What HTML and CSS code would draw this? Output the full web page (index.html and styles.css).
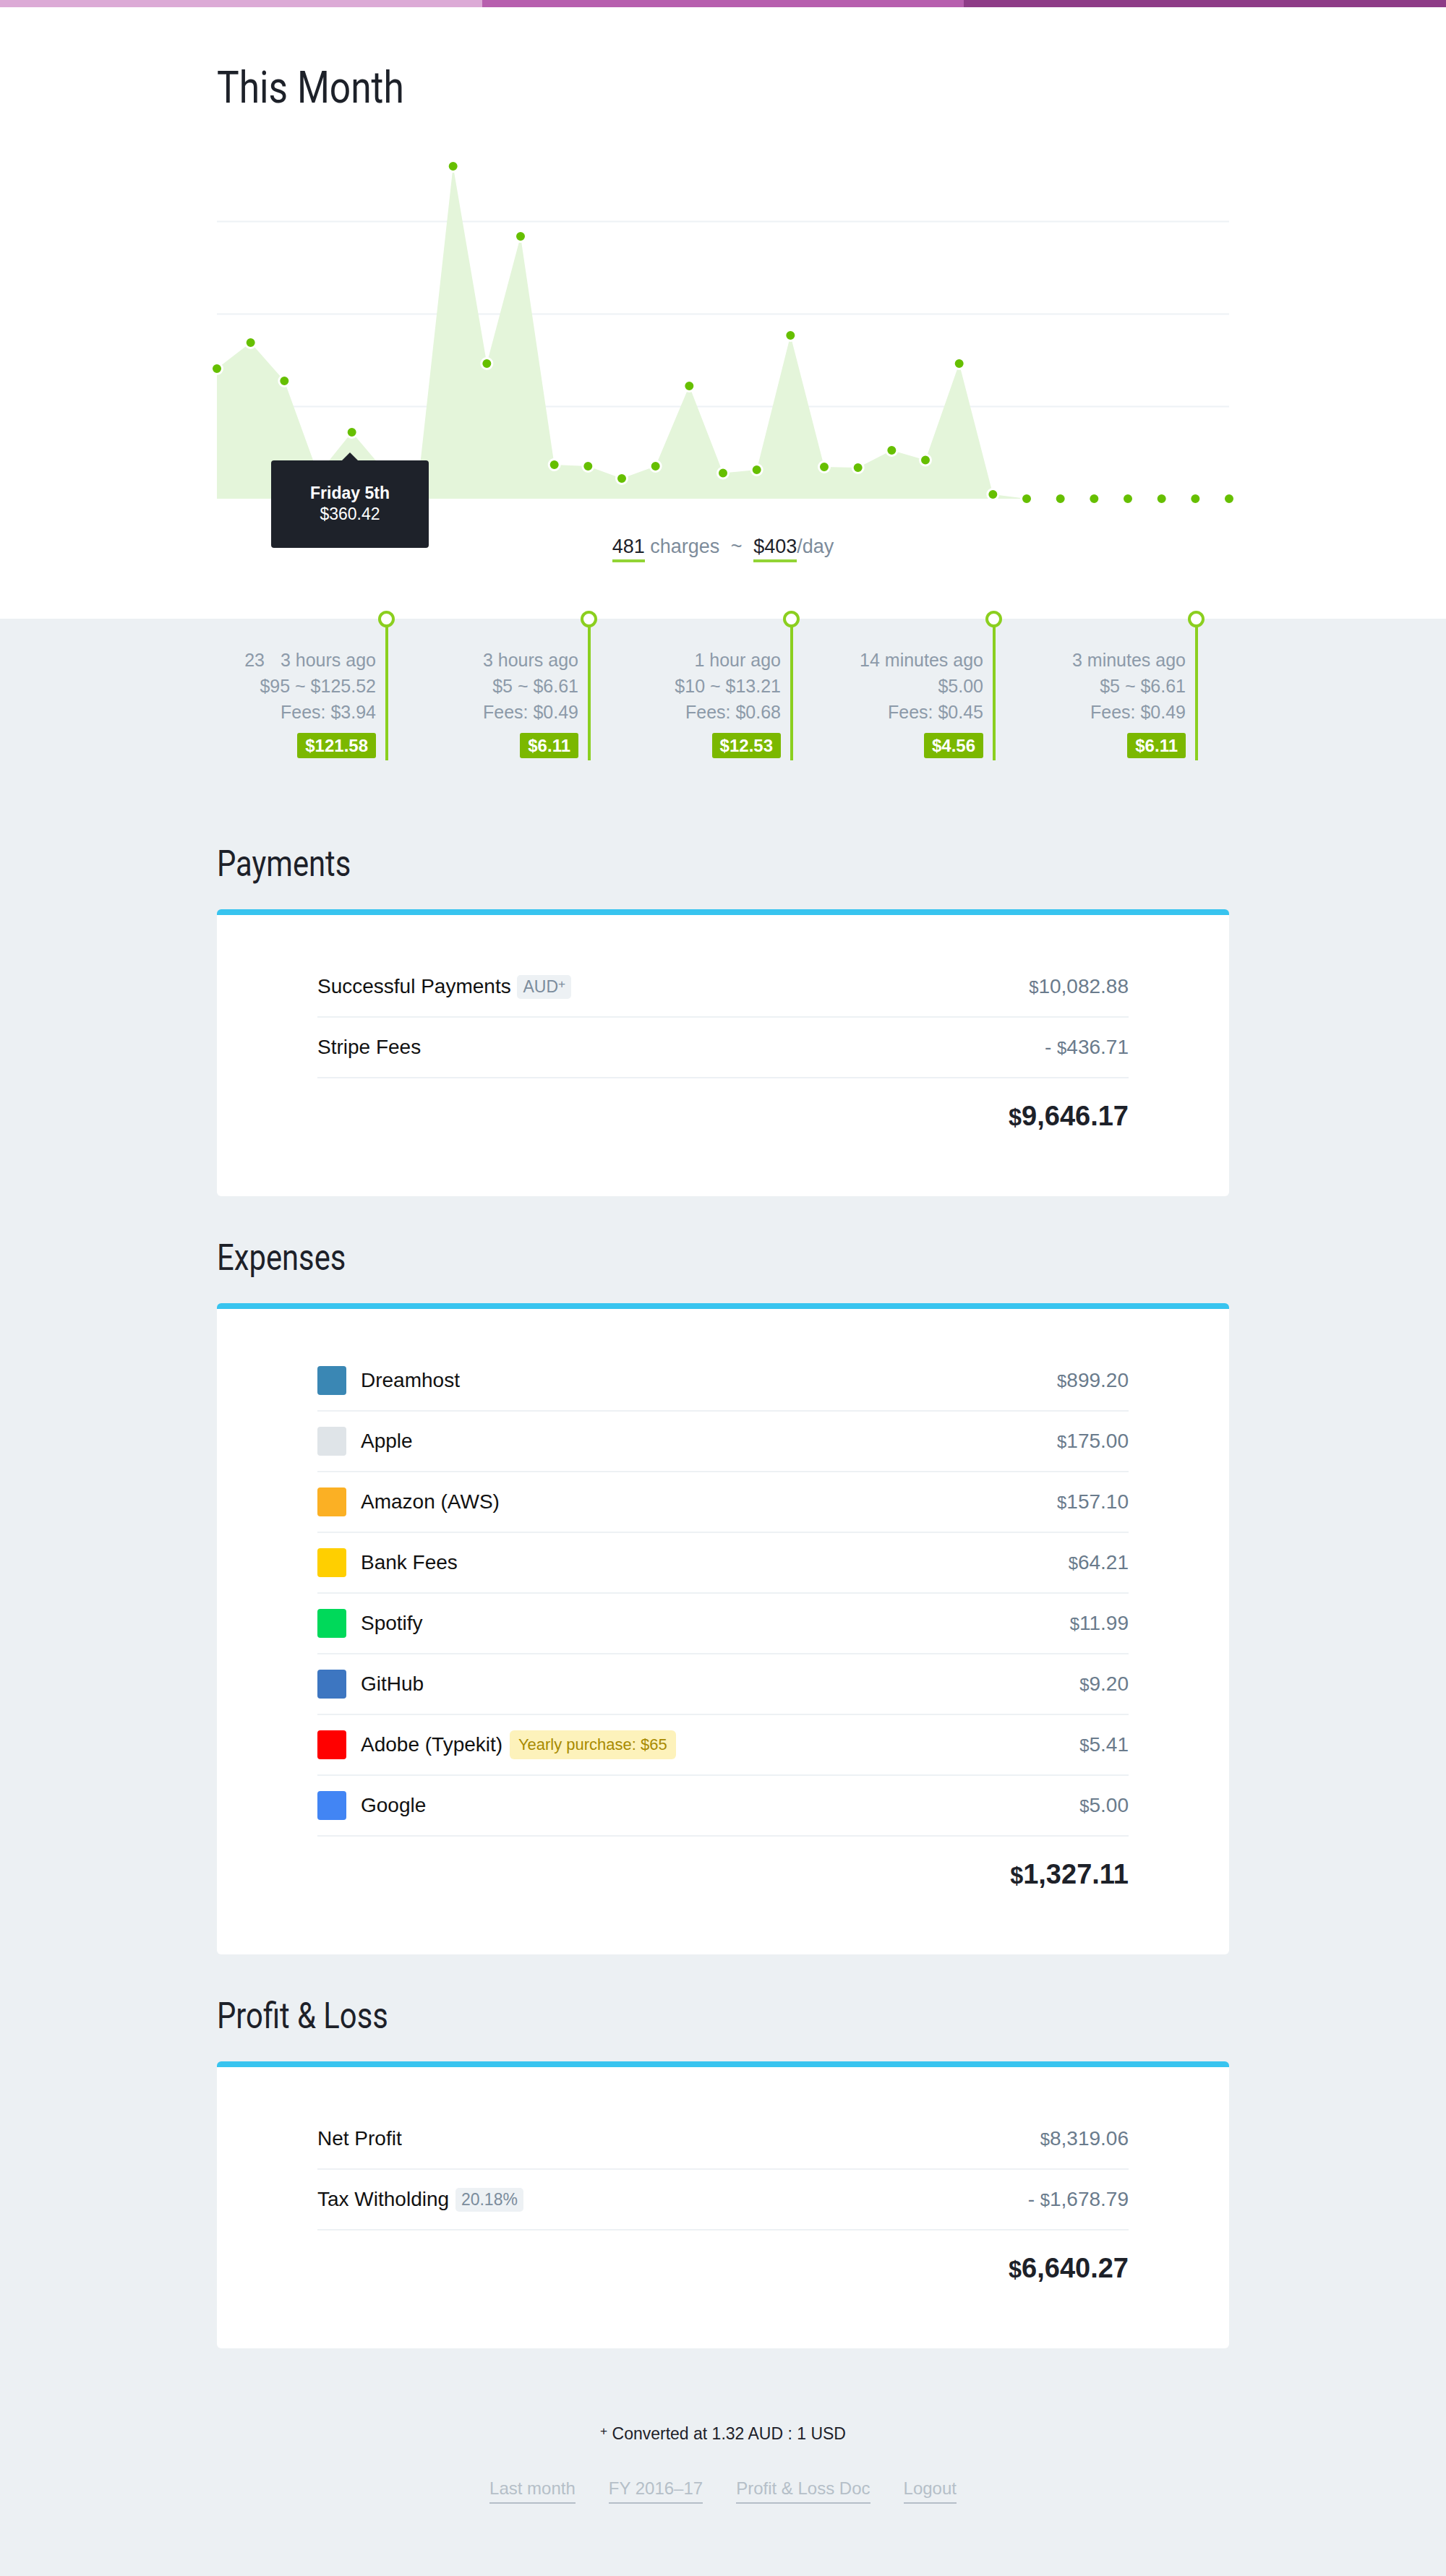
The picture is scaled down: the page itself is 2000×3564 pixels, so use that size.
FILE: index.html
```html
<!DOCTYPE html>
<html lang="en">
<head>
<meta charset="utf-8">
<title>This Month</title>
<link rel="stylesheet" href="styles.css">
</head>
<body>
<div class="topbar"><span class="seg seg-1"></span><span class="seg seg-2"></span><span class="seg seg-3"></span></div>

<header class="hero">
  <div class="wrap">
    <h1 class="title">This Month</h1>
    <div class="chart">
      <svg class="chart-svg" width="1400" height="530" viewBox="0 0 1400 530">
        <g class="grid">
          <line x1="0" y1="136.5" x2="1400" y2="136.5"/>
          <line x1="0" y1="264.5" x2="1400" y2="264.5"/>
          <line x1="0" y1="392.5" x2="1400" y2="392.5"/>
        </g>
        <path class="area" d="M0,520 L0,340 L46.67,304 L93.33,357 L140,486 L186.67,428 L233.33,483 L280,483 L326.67,60 L373.33,333 L420,157 L466.67,473 L513.33,475 L560,492 L606.67,475 L653.33,364 L700,484.5 L746.67,480 L793.33,294 L840,476 L886.67,477 L933.33,453 L980,466.5 L1026.67,333 L1073.33,514 L1120,520 L1400,520 Z"/>
        <g class="dots">
          <circle cx="0" cy="340" r="7.5"/>
          <circle cx="46.67" cy="304" r="7.5"/>
          <circle cx="93.33" cy="357" r="7.5"/>
          <circle cx="140" cy="486" r="7.5"/>
          <circle cx="186.67" cy="428" r="7.5"/>
          <circle cx="233.33" cy="483" r="7.5"/>
          <circle cx="280" cy="483" r="7.5"/>
          <circle cx="326.67" cy="60" r="7.5"/>
          <circle cx="373.33" cy="333" r="7.5"/>
          <circle cx="420" cy="157" r="7.5"/>
          <circle cx="466.67" cy="473" r="7.5"/>
          <circle cx="513.33" cy="475" r="7.5"/>
          <circle cx="560" cy="492" r="7.5"/>
          <circle cx="606.67" cy="475" r="7.5"/>
          <circle cx="653.33" cy="364" r="7.5"/>
          <circle cx="700" cy="484.5" r="7.5"/>
          <circle cx="746.67" cy="480" r="7.5"/>
          <circle cx="793.33" cy="294" r="7.5"/>
          <circle cx="840" cy="476" r="7.5"/>
          <circle cx="886.67" cy="477" r="7.5"/>
          <circle cx="933.33" cy="453" r="7.5"/>
          <circle cx="980" cy="466.5" r="7.5"/>
          <circle cx="1026.67" cy="333" r="7.5"/>
          <circle cx="1073.33" cy="514" r="7.5"/>
          <circle cx="1120" cy="520" r="7.5"/>
          <circle cx="1166.67" cy="520" r="7.5"/>
          <circle cx="1213.33" cy="520" r="7.5"/>
          <circle cx="1260" cy="520" r="7.5"/>
          <circle cx="1306.67" cy="520" r="7.5"/>
          <circle cx="1353.33" cy="520" r="7.5"/>
          <circle cx="1400" cy="520" r="7.5"/>
        </g>
      </svg>
      <div class="tooltip">
        <strong class="tooltip-day">Friday 5th</strong>
        <span class="tooltip-value">$360.42</span>
      </div>
    </div>
    <p class="summary"><span class="stat">481</span> charges <span class="tilde">~</span> <span class="stat">$403</span>/day</p>
  </div>
</header>

<main class="main">
  <div class="wrap">
    <div class="timeline">
      <div class="tl-item">
        <div class="tl-body">
          <div class="tl-line-text"><span class="ghost">23</span>3 hours ago</div>
          <div class="tl-line-text">$95 ~ $125.52</div>
          <div class="tl-line-text">Fees: $3.94</div>
          <div class="tl-badge">$121.58</div>
        </div>
        <div class="tl-rail"><span class="tl-dot"></span><span class="tl-stem"></span></div>
      </div>
      <div class="tl-item">
        <div class="tl-body">
          <div class="tl-line-text">3 hours ago</div>
          <div class="tl-line-text">$5 ~ $6.61</div>
          <div class="tl-line-text">Fees: $0.49</div>
          <div class="tl-badge">$6.11</div>
        </div>
        <div class="tl-rail"><span class="tl-dot"></span><span class="tl-stem"></span></div>
      </div>
      <div class="tl-item">
        <div class="tl-body">
          <div class="tl-line-text">1 hour ago</div>
          <div class="tl-line-text">$10 ~ $13.21</div>
          <div class="tl-line-text">Fees: $0.68</div>
          <div class="tl-badge">$12.53</div>
        </div>
        <div class="tl-rail"><span class="tl-dot"></span><span class="tl-stem"></span></div>
      </div>
      <div class="tl-item">
        <div class="tl-body">
          <div class="tl-line-text">14 minutes ago</div>
          <div class="tl-line-text">$5.00</div>
          <div class="tl-line-text">Fees: $0.45</div>
          <div class="tl-badge">$4.56</div>
        </div>
        <div class="tl-rail"><span class="tl-dot"></span><span class="tl-stem"></span></div>
      </div>
      <div class="tl-item">
        <div class="tl-body">
          <div class="tl-line-text">3 minutes ago</div>
          <div class="tl-line-text">$5 ~ $6.61</div>
          <div class="tl-line-text">Fees: $0.49</div>
          <div class="tl-badge">$6.11</div>
        </div>
        <div class="tl-rail"><span class="tl-dot"></span><span class="tl-stem"></span></div>
      </div>
    </div>

    <section class="panel">
      <h2 class="panel-title">Payments</h2>
      <div class="card">
        <div class="row">
          <div class="label">Successful Payments <span class="tag">AUD<sup class="sup">+</sup></span></div>
          <div class="amount"><span class="cur">$</span>10,082.88</div>
        </div>
        <div class="row">
          <div class="label">Stripe Fees</div>
          <div class="amount">- <span class="cur">$</span>436.71</div>
        </div>
        <div class="total"><span class="cur">$</span>9,646.17</div>
      </div>
    </section>

    <section class="panel">
      <h2 class="panel-title">Expenses</h2>
      <div class="card">
        <div class="row">
          <div class="label"><span class="swatch sw-dreamhost"></span>Dreamhost</div>
          <div class="amount"><span class="cur">$</span>899.20</div>
        </div>
        <div class="row">
          <div class="label"><span class="swatch sw-apple"></span>Apple</div>
          <div class="amount"><span class="cur">$</span>175.00</div>
        </div>
        <div class="row">
          <div class="label"><span class="swatch sw-amazon"></span>Amazon (AWS)</div>
          <div class="amount"><span class="cur">$</span>157.10</div>
        </div>
        <div class="row">
          <div class="label"><span class="swatch sw-bank"></span>Bank Fees</div>
          <div class="amount"><span class="cur">$</span>64.21</div>
        </div>
        <div class="row">
          <div class="label"><span class="swatch sw-spotify"></span>Spotify</div>
          <div class="amount"><span class="cur">$</span>11.99</div>
        </div>
        <div class="row">
          <div class="label"><span class="swatch sw-github"></span>GitHub</div>
          <div class="amount"><span class="cur">$</span>9.20</div>
        </div>
        <div class="row">
          <div class="label"><span class="swatch sw-adobe"></span>Adobe (Typekit) <span class="note">Yearly purchase: $65</span></div>
          <div class="amount"><span class="cur">$</span>5.41</div>
        </div>
        <div class="row">
          <div class="label"><span class="swatch sw-google"></span>Google</div>
          <div class="amount"><span class="cur">$</span>5.00</div>
        </div>
        <div class="total"><span class="cur">$</span>1,327.11</div>
      </div>
    </section>

    <section class="panel">
      <h2 class="panel-title">Profit &amp; Loss</h2>
      <div class="card">
        <div class="row">
          <div class="label">Net Profit</div>
          <div class="amount"><span class="cur">$</span>8,319.06</div>
        </div>
        <div class="row">
          <div class="label">Tax Witholding <span class="tag">20.18%</span></div>
          <div class="amount">- <span class="cur">$</span>1,678.79</div>
        </div>
        <div class="total"><span class="cur">$</span>6,640.27</div>
      </div>
    </section>

    <footer class="footer">
      <p class="footnote"><sup class="sup">+</sup> Converted at 1.32 AUD : 1 USD</p>
      <nav class="links">
        <a class="link" href="#">Last month</a>
        <a class="link" href="#">FY 2016–17</a>
        <a class="link" href="#">Profit &amp; Loss Doc</a>
        <a class="link" href="#">Logout</a>
      </nav>
    </footer>
  </div>
</main>
</body>
</html>
```

FILE: styles.css
```css
* { box-sizing: border-box; }

html, body {
  margin: 0;
  padding: 0;
}

body {
  background: #ecf0f3;
  font-family: "Liberation Sans", Arial, sans-serif;
  color: #1d2129;
}

.topbar {
  display: flex;
  height: 10px;
}
.seg { flex: 1; }
.seg-1 { background: #dcaad6; }
.seg-2 { background: #b75fae; }
.seg-3 { background: #8e3c87; }

.wrap {
  width: 1400px;
  margin: 0 auto;
}

/* ---------- hero ---------- */
.hero {
  background: #fff;
  padding: 80px 0 82px;
}

.title {
  margin: 0;
  font-family: Roboto, "Liberation Sans", sans-serif;
  font-weight: normal;
  font-size: 62px;
  line-height: 62px;
  color: #1d2129;
  transform: scaleX(0.83);
  transform-origin: 0 0;
}

.chart {
  position: relative;
  margin-top: 18px;
  height: 530px;
}

.chart-svg {
  display: block;
  overflow: visible;
}

.grid line {
  stroke: #eef2f5;
  stroke-width: 2;
}

.area {
  fill: #e4f5da;
}

.dots circle {
  fill: #66bf00;
  stroke: #fff;
  stroke-width: 3;
}

.tooltip {
  position: absolute;
  left: 75px;
  top: 467px;
  width: 218px;
  height: 121px;
  padding-top: 31px;
  background: #1e222a;
  border-radius: 4px;
  color: #fff;
  text-align: center;
  font-size: 23px;
  line-height: 29px;
}
.tooltip::before {
  content: "";
  position: absolute;
  left: 98px;
  top: -11px;
  border-left: 11px solid transparent;
  border-right: 11px solid transparent;
  border-bottom: 11px solid #1e222a;
}
.tooltip-day {
  display: block;
  font-weight: bold;
}
.tooltip-value {
  display: block;
}

.summary {
  margin: 38px 0 0;
  text-align: center;
  font-size: 27px;
  line-height: 36px;
  color: #7d8c9b;
}
.stat {
  color: #1d2129;
  padding-bottom: 3px;
  border-bottom: 4px solid #92d435;
}
.tilde {
  margin: 0 8px;
}

/* ---------- timeline ---------- */
.main {
  padding-bottom: 104px;
}

.timeline {
  position: relative;
  margin-top: -11.5px;
  display: grid;
  grid-template-columns: repeat(5, 280px);
}

.tl-item {
  display: grid;
  grid-template-columns: 1fr 23px;
  column-gap: 3px;
  padding-right: 34px;
}

.tl-body {
  display: flex;
  flex-direction: column;
  align-items: flex-end;
  padding-top: 50.5px;
  padding-bottom: 3px;
  font-size: 25px;
  line-height: 36px;
  color: #8c9aa9;
  white-space: nowrap;
}

.ghost {
  margin-right: 22px;
}

.tl-badge {
  margin-top: 11px;
  height: 35px;
  line-height: 35px;
  padding: 0 11px;
  background: #7bb800;
  color: #fff;
  font-weight: bold;
  font-size: 24px;
  border-radius: 3px;
}

.tl-rail {
  display: flex;
  flex-direction: column;
  align-items: center;
}
.tl-dot {
  width: 23px;
  height: 23px;
  border: 4px solid #8bcf1f;
  border-radius: 50%;
  background: #fff;
  flex: none;
}
.tl-stem {
  width: 4px;
  flex: 1;
  background: #8bcf1f;
}

/* ---------- panels ---------- */
.panel {
  margin-top: 60px;
}
.timeline + .panel {
  margin-top: 118px;
}

.panel-title {
  margin: 0 0 38px;
  font-family: Roboto, "Liberation Sans", sans-serif;
  font-weight: normal;
  font-size: 50px;
  line-height: 50px;
  color: #1d2129;
  transform: scaleX(0.835);
  transform-origin: 0 0;
}

.card {
  background: #fff;
  border-top: 8px solid #38c4ef;
  border-radius: 6px;
  padding: 58px 139px;
}

.row {
  display: flex;
  align-items: center;
  justify-content: space-between;
  height: 84px;
  border-bottom: 2px solid #edf1f4;
  font-size: 28px;
}

.label {
  display: flex;
  align-items: center;
  color: #111;
  white-space: pre;
}

.amount {
  color: #6a7b8c;
}

.cur {
  font-size: 0.85em;
}

.tag {
  display: inline-block;
  margin-left: 1px;
  height: 33px;
  line-height: 33px;
  padding: 0 8px;
  background: #edf1f4;
  border-radius: 5px;
  color: #7b8c9c;
  font-size: 23px;
}

.sup {
  font-size: 0.75em;
  vertical-align: top;
  position: relative;
  top: -4px;
}

.note {
  display: inline-block;
  margin-left: 2px;
  height: 40px;
  line-height: 40px;
  padding: 0 12px;
  background: #fdf2bb;
  border-radius: 6px;
  color: #a88a00;
  font-size: 22px;
}

.swatch {
  width: 40px;
  height: 40px;
  margin-right: 20px;
  border-radius: 4px;
  flex: none;
}
.sw-dreamhost { background: #3a87b4; }
.sw-apple { background: #dfe4e8; }
.sw-amazon { background: #fbb024; }
.sw-bank { background: #ffcf00; }
.sw-spotify { background: #00d95a; }
.sw-github { background: #3d76c1; }
.sw-adobe { background: #ff0000; }
.sw-google { background: #4285f4; }

.total {
  height: 105px;
  line-height: 105px;
  text-align: right;
  font-size: 38px;
  font-weight: bold;
  color: #1d2129;
}

/* ---------- footer ---------- */
.footer {
  margin-top: 103px;
  text-align: center;
}

.footnote {
  margin: 0;
  font-size: 23px;
  line-height: 30px;
  color: #1d2129;
}

.links {
  margin-top: 46px;
  display: flex;
  justify-content: center;
  gap: 46px;
  font-size: 24px;
  line-height: 30px;
}

.link {
  color: #b5bfc8;
  text-decoration: none;
  padding-bottom: 4px;
  border-bottom: 2px solid #b5bfc8;
}
```
